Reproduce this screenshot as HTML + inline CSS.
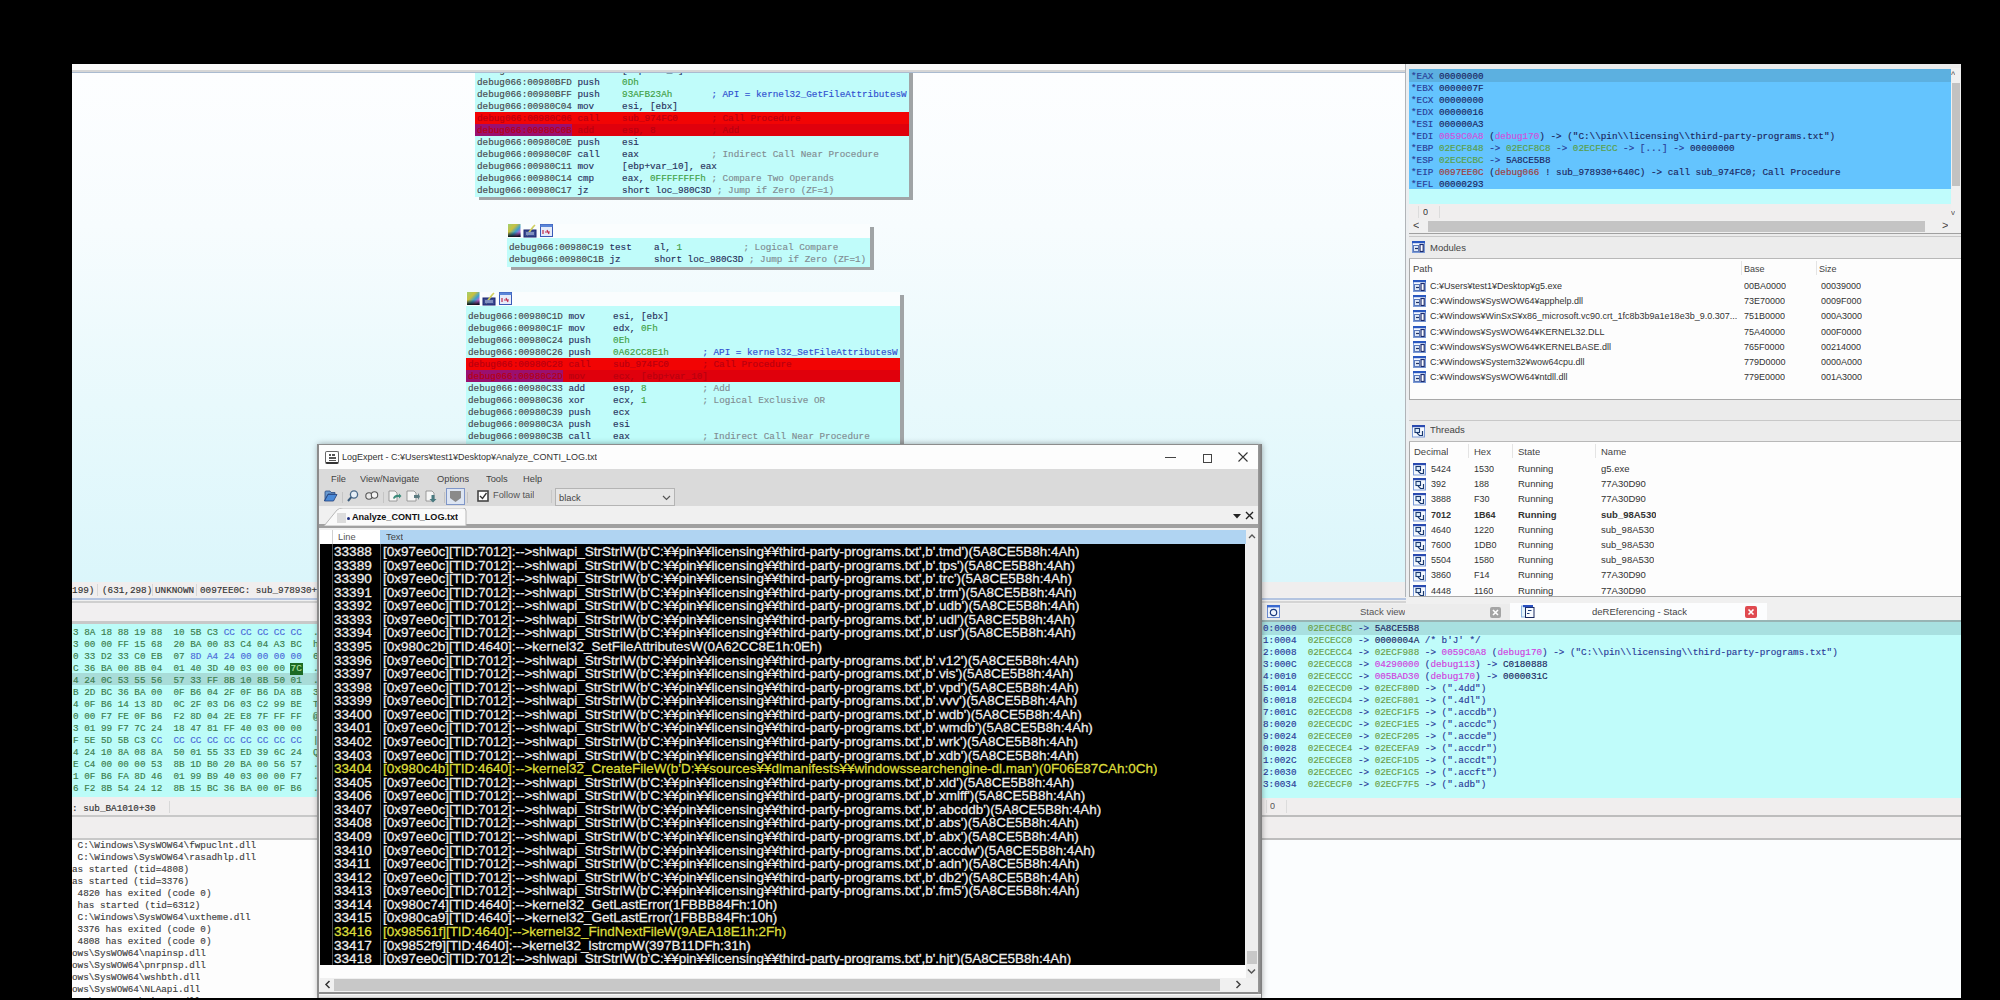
<!DOCTYPE html><html><head><meta charset="utf-8"><style>
*{margin:0;padding:0;box-sizing:border-box}
html,body{width:2000px;height:1000px;overflow:hidden;background:#000;position:relative}
.a{position:absolute;overflow:hidden}
.m{font-family:"Liberation Mono",monospace;font-size:9.3px;line-height:12px;white-space:pre;-webkit-text-stroke:0.15px currentColor}
.s{font-family:"Liberation Sans",sans-serif;white-space:pre}
.ad{color:#45484c}
.mn{color:#283060}
.nm{color:#40a044}
.cm{color:#808c92}
.op{color:#28305a}
.ap{color:#3050d0}
.rd{color:#c00010}
.rr span{color:#b80010 !important}
</style></head><body><div class="a" style="left:72px;top:64px;width:1889px;height:934px;background:#f0f0f0"></div><div class="a" style="left:72px;top:64px;width:1334px;height:6px;background:#fbfbfb"></div><div class="a" style="left:72px;top:70px;width:1334px;height:2px;background:#d6d6d6"></div><div class="a" style="left:72px;top:72px;width:1334px;height:1px;background:#aabbd0"></div><div class="a" style="left:72px;top:73px;width:1334px;height:509px;background:linear-gradient(#fdfeff 0%,#f7fcfe 30%,#e8f9fc 65%,#dbf6fb 100%)"><div class="a" style="left:407px;top:-8px;width:434px;height:135px;background:#a0a4a6"></div><div class="a" style="left:403px;top:-11px;width:434px;height:135px;"><div class="a" style="left:0px;top:0px;width:434px;height:135px;background:#c0fcfa"><div class="a" style="left:0px;top:50px;width:434px;height:12px;background:#f20404"></div><div class="a" style="left:0px;top:62px;width:434px;height:12px;background:#e0000c"></div><div class="a" style="left:0px;top:62px;width:97px;height:12px;background:#9a1070"></div><div class="a m" style="left:2px;top:3px;"><span class="ad">debug066:00980BF6</span> <span class="mn">mov    </span> <span class="op">[ebp+var_C]</span></div><div class="a m" style="left:2px;top:15px;"><span class="ad">debug066:00980BFD</span> <span class="mn">push   </span> <span class="nm">0Dh</span></div><div class="a m" style="left:2px;top:27px;"><span class="ad">debug066:00980BFF</span> <span class="mn">push   </span> <span class="nm">93AFB23Ah</span>       <span class="ap">; API = kernel32_GetFileAttributesW</span></div><div class="a m" style="left:2px;top:39px;"><span class="ad">debug066:00980C04</span> <span class="mn">mov    </span> <span class="op">esi, [ebx]</span></div><div class="a m rr" style="left:2px;top:51px;"><span class="ad">debug066:00980C06</span> <span class="mn">call   </span> <span class="op">sub_974FC0</span>      <span class="cm">; Call Procedure</span></div><div class="a m rr" style="left:2px;top:63px;"><span class="ad">debug066:00980C0B</span> <span class="mn">add    </span> <span class="op">esp, </span><span class="nm">8</span>          <span class="cm">; Add</span></div><div class="a m" style="left:2px;top:75px;"><span class="ad">debug066:00980C0E</span> <span class="mn">push   </span> <span class="op">esi</span></div><div class="a m" style="left:2px;top:87px;"><span class="ad">debug066:00980C0F</span> <span class="mn">call   </span> <span class="op">eax</span>             <span class="cm">; Indirect Call Near Procedure</span></div><div class="a m" style="left:2px;top:99px;"><span class="ad">debug066:00980C11</span> <span class="mn">mov    </span> <span class="op">[ebp+var_10], eax</span></div><div class="a m" style="left:2px;top:111px;"><span class="ad">debug066:00980C14</span> <span class="mn">cmp    </span> <span class="op">eax, </span><span class="nm">0FFFFFFFFh</span> <span class="cm">; Compare Two Operands</span></div><div class="a m" style="left:2px;top:123px;"><span class="ad">debug066:00980C17</span> <span class="mn">jz     </span> <span class="op">short loc_980C3D</span> <span class="cm">; Jump if Zero (ZF=1)</span></div></div></div><div class="a" style="left:439px;top:154px;width:363px;height:43px;background:#a0a4a6"></div><div class="a" style="left:435px;top:151px;width:363px;height:43px;"><div class="a" style="left:0px;top:0px;width:363px;height:14px;background:#fafdfe"></div><svg class="a" style="left:0;top:0" width="48" height="14"><defs><linearGradient id="pg" x1="0" y1="0" x2="1" y2="1"><stop offset="0" stop-color="#a0d070"/><stop offset="0.35" stop-color="#c8c040"/><stop offset="0.6" stop-color="#3aa0d0"/><stop offset="0.8" stop-color="#c060d0"/><stop offset="1" stop-color="#2030a0"/></linearGradient><linearGradient id="pb" x1="0" y1="0" x2="0" y2="1"><stop offset="0.6" stop-color="#000" stop-opacity="0"/><stop offset="1" stop-color="#000" stop-opacity="0.9"/></linearGradient></defs><rect x="1" y="0" width="12.5" height="13" fill="url(#pg)"/><rect x="1" y="0" width="12.5" height="13" fill="url(#pb)"/><rect x="17" y="6" width="12" height="7" fill="#3a4a90" stroke="#1a2470" stroke-width="1"/><path d="M20 11 L26 3 L28 1" stroke="#d0d060" stroke-width="1.6"/><rect x="19" y="8" width="8" height="3" fill="#8090c0"/><rect x="33.5" y="0.5" width="12" height="12" fill="#e6ecfa" stroke="#3a5ab8" stroke-width="1"/><rect x="33.5" y="0.5" width="12" height="2.5" fill="#5a86d8"/><path d="M36 6 L36 10 M38 8 L43 8 M40 6 L42 10" stroke="#c03050" stroke-width="1.2"/></svg><div class="a" style="left:0px;top:14px;width:363px;height:29px;background:#c0fcfa"><div class="a m" style="left:2px;top:4px;"><span class="ad">debug066:00980C19</span> <span class="mn">test   </span> <span class="op">al, </span><span class="nm">1</span>           <span class="cm">; Logical Compare</span></div><div class="a m" style="left:2px;top:16px;"><span class="ad">debug066:00980C1B</span> <span class="mn">jz     </span> <span class="op">short loc_980C3D</span> <span class="cm">; Jump if Zero (ZF=1)</span></div></div></div><div class="a" style="left:398px;top:222px;width:434px;height:180px;background:#a0a4a6"></div><div class="a" style="left:394px;top:219px;width:434px;height:180px;"><div class="a" style="left:0px;top:0px;width:434px;height:14px;background:#fafdfe"></div><svg class="a" style="left:0;top:0" width="48" height="14"><defs><linearGradient id="pg" x1="0" y1="0" x2="1" y2="1"><stop offset="0" stop-color="#a0d070"/><stop offset="0.35" stop-color="#c8c040"/><stop offset="0.6" stop-color="#3aa0d0"/><stop offset="0.8" stop-color="#c060d0"/><stop offset="1" stop-color="#2030a0"/></linearGradient><linearGradient id="pb" x1="0" y1="0" x2="0" y2="1"><stop offset="0.6" stop-color="#000" stop-opacity="0"/><stop offset="1" stop-color="#000" stop-opacity="0.9"/></linearGradient></defs><rect x="1" y="0" width="12.5" height="13" fill="url(#pg)"/><rect x="1" y="0" width="12.5" height="13" fill="url(#pb)"/><rect x="17" y="6" width="12" height="7" fill="#3a4a90" stroke="#1a2470" stroke-width="1"/><path d="M20 11 L26 3 L28 1" stroke="#d0d060" stroke-width="1.6"/><rect x="19" y="8" width="8" height="3" fill="#8090c0"/><rect x="33.5" y="0.5" width="12" height="12" fill="#e6ecfa" stroke="#3a5ab8" stroke-width="1"/><rect x="33.5" y="0.5" width="12" height="2.5" fill="#5a86d8"/><path d="M36 6 L36 10 M38 8 L43 8 M40 6 L42 10" stroke="#c03050" stroke-width="1.2"/></svg><div class="a" style="left:0px;top:14px;width:434px;height:166px;background:#c0fcfa"><div class="a" style="left:0px;top:52px;width:434px;height:12px;background:#f20404"></div><div class="a" style="left:0px;top:64px;width:434px;height:12px;background:#e0000c"></div><div class="a" style="left:0px;top:64px;width:97px;height:12px;background:#9a1070"></div><div class="a m" style="left:2px;top:5px;"><span class="ad">debug066:00980C1D</span> <span class="mn">mov    </span> <span class="op">esi, [ebx]</span></div><div class="a m" style="left:2px;top:17px;"><span class="ad">debug066:00980C1F</span> <span class="mn">mov    </span> <span class="op">edx, </span><span class="nm">0Fh</span></div><div class="a m" style="left:2px;top:29px;"><span class="ad">debug066:00980C24</span> <span class="mn">push   </span> <span class="nm">0Eh</span></div><div class="a m" style="left:2px;top:41px;"><span class="ad">debug066:00980C26</span> <span class="mn">push   </span> <span class="nm">0A62CC8E1h</span>      <span class="ap">; API = kernel32_SetFileAttributesW</span></div><div class="a m rr" style="left:2px;top:53px;"><span class="ad">debug066:00980C28</span> <span class="mn">call   </span> <span class="op">sub_974FC0</span>      <span class="cm">; Call Procedure</span></div><div class="a m rr" style="left:2px;top:65px;"><span class="ad">debug066:00980C2D</span> <span class="mn">mov    </span> <span class="op">ecx, [ebp+var_10]</span></div><div class="a m" style="left:2px;top:77px;"><span class="ad">debug066:00980C33</span> <span class="mn">add    </span> <span class="op">esp, </span><span class="nm">8</span>          <span class="cm">; Add</span></div><div class="a m" style="left:2px;top:89px;"><span class="ad">debug066:00980C36</span> <span class="mn">xor    </span> <span class="op">ecx, </span><span class="nm">1</span>          <span class="cm">; Logical Exclusive OR</span></div><div class="a m" style="left:2px;top:101px;"><span class="ad">debug066:00980C39</span> <span class="mn">push   </span> <span class="op">ecx</span></div><div class="a m" style="left:2px;top:113px;"><span class="ad">debug066:00980C3A</span> <span class="mn">push   </span> <span class="op">esi</span></div><div class="a m" style="left:2px;top:125px;"><span class="ad">debug066:00980C3B</span> <span class="mn">call   </span> <span class="op">eax</span>             <span class="cm">; Indirect Call Near Procedure</span></div><div class="a m" style="left:2px;top:137px;"><span class="ad">debug066:00980C3D</span> <span class="mn">push   </span> <span class="op">esi</span></div></div></div></div><div class="a" style="left:72px;top:582px;width:1334px;height:16px;background:#f0eeee"></div><div class="a m" style="left:66.5px;top:582px;color:#333;font-size:9.3px;line-height:16px;top:583px">5199)</div><div class="a m" style="left:102px;top:582px;color:#333;font-size:9.3px;line-height:16px;top:583px">(631,298)</div><div class="a m" style="left:155px;top:582px;color:#333;font-size:9.3px;line-height:16px;top:583px">UNKNOWN</div><div class="a m" style="left:200px;top:582px;color:#333;font-size:9.3px;line-height:16px;top:583px">0097EE0C: sub_978930+640C</div><div class="a" style="left:97px;top:584px;width:1px;height:12px;background:#d8d8d8"></div><div class="a" style="left:152px;top:584px;width:1px;height:12px;background:#d8d8d8"></div><div class="a" style="left:196px;top:584px;width:1px;height:12px;background:#d8d8d8"></div><div class="a" style="left:72px;top:598px;width:1334px;height:2px;background:#b4c4e0"></div><div class="a" style="left:72px;top:601px;width:1334px;height:2px;background:#cfcfcf"></div><div class="a" style="left:72px;top:603px;width:1186px;height:18px;background:#f1eff0"></div><div class="a" style="left:72px;top:621px;width:1186px;height:3px;background:#c8c8c8"></div><div class="a" style="left:72px;top:624px;width:1186px;height:173px;background:#bcfcf8"><div class="a" style="left:0px;top:49px;width:1186px;height:12px;background:#a8dcd8"></div><div class="a m" style="left:1px;top:3px;color:#3a7c4c">3 8A 18 88 19 88  10 5B C3 CC CC CC CC CC  .</div><div class="a m" style="left:151.66px;top:3px;color:#4a6ad8;background:#bcfcf8">CC CC CC CC CC</div><div class="a m" style="left:1px;top:15px;color:#3a7c4c">3 00 00 FF 15 68  20 BA 00 83 C4 04 A3 BC  h</div><div class="a m" style="left:1px;top:27px;color:#3a7c4c">0 33 D2 33 C0 EB  07 8D A4 24 00 00 00 00  6</div><div class="a m" style="left:118.18px;top:27px;color:#4a6ad8;background:#bcfcf8">8D A4 24 00 00 00 00</div><div class="a m" style="left:1px;top:39px;color:#3a7c4c">C 36 BA 00 8B 04  01 40 3D 40 03 00 00 7C  .</div><div class="a m" style="left:1px;top:51px;color:#3a7c4c">4 24 0C 53 55 56  57 33 FF 8B 10 8B 50 01  .</div><div class="a m" style="left:1px;top:63px;color:#3a7c4c">B 2D BC 36 BA 00  0F B6 04 2F 0F B6 DA 8B  3</div><div class="a m" style="left:1px;top:75px;color:#3a7c4c">4 0F B6 14 13 8D  0C 2F 03 D6 03 C2 99 BE  T</div><div class="a m" style="left:1px;top:87px;color:#3a7c4c">0 00 F7 FE 0F B6  F2 8D 04 2E E8 7F FF FF  @</div><div class="a m" style="left:1px;top:99px;color:#3a7c4c">3 01 99 F7 7C 24  18 47 81 FF 40 03 00 00  .</div><div class="a m" style="left:1px;top:111px;color:#3a7c4c">F 5E 5D 5B C3 CC  CC CC CC CC CC CC CC CC  |</div><div class="a m" style="left:84.7px;top:111px;color:#4a6ad8;background:#bcfcf8">C  CC CC CC CC CC CC CC CC</div><div class="a m" style="left:1px;top:123px;color:#3a7c4c">4 24 10 8A 08 8A  50 01 55 33 ED 39 6C 24  Q</div><div class="a m" style="left:1px;top:135px;color:#3a7c4c">E C4 00 00 00 53  8B 1D B0 20 BA 00 56 57  .</div><div class="a m" style="left:1px;top:147px;color:#3a7c4c">1 0F B6 FA 8D 46  01 99 B9 40 03 00 00 F7  .</div><div class="a m" style="left:1px;top:159px;color:#3a7c4c">6 F2 8B 54 24 12  8B 15 BC 36 BA 00 0F B6  .</div><div class="a" style="left:217.62px;top:39px;width:13px;height:12px;background:#1c6a24"><div class="a m" style="left:1px;top:0px;color:#b0e0a0">7C</div></div></div><div class="a" style="left:72px;top:797px;width:1186px;height:18px;background:#f0eeee"><div class="a m" style="left:0px;top:4px;color:#333;line-height:16px">: sub_BA1010+30</div><div class="a" style="left:97px;top:4px;width:1px;height:12px;background:#d8d8d8"></div></div><div class="a" style="left:72px;top:815px;width:1186px;height:2px;background:#c8c8c8"></div><div class="a" style="left:72px;top:817px;width:1186px;height:21px;background:#f0eeee"></div><div class="a" style="left:72px;top:838px;width:1186px;height:2px;background:#c8c8c8"></div><div class="a" style="left:72px;top:840px;width:1186px;height:158px;background:#fdfdfd"><div class="a m" style="left:0px;top:0px;color:#404040"> C:\Windows\SysWOW64\fwpuclnt.dll</div><div class="a m" style="left:0px;top:12px;color:#404040"> C:\Windows\SysWOW64\rasadhlp.dll</div><div class="a m" style="left:0px;top:24px;color:#404040">as started (tid=4808)</div><div class="a m" style="left:0px;top:36px;color:#404040">as started (tid=3376)</div><div class="a m" style="left:0px;top:48px;color:#404040"> 4820 has exited (code 0)</div><div class="a m" style="left:0px;top:60px;color:#404040"> has started (tid=6312)</div><div class="a m" style="left:0px;top:72px;color:#404040"> C:\Windows\SysWOW64\uxtheme.dll</div><div class="a m" style="left:0px;top:84px;color:#404040"> 3376 has exited (code 0)</div><div class="a m" style="left:0px;top:96px;color:#404040"> 4808 has exited (code 0)</div><div class="a m" style="left:0px;top:108px;color:#404040">ows\SysWOW64\napinsp.dll</div><div class="a m" style="left:0px;top:120px;color:#404040">ows\SysWOW64\pnrpnsp.dll</div><div class="a m" style="left:0px;top:132px;color:#404040">ows\SysWOW64\wshbth.dll</div><div class="a m" style="left:0px;top:144px;color:#404040">ows\SysWOW64\NLAapi.dll</div><div class="a m" style="left:0px;top:156px;color:#404040">ows\SysWOW64\winrnr.dll</div></div><div class="a" style="left:1406px;top:64px;width:555px;height:540px;background:#ebebeb"></div><div class="a" style="left:1406px;top:64px;width:3px;height:540px;background:#eceef0"></div><div class="a" style="left:1405px;top:64px;width:1px;height:534px;background:#b0b4b8"></div><div class="a" style="left:1409px;top:68px;width:542px;height:136px;"><div class="a" style="left:0px;top:1px;width:542px;height:13px;background:#5cb0e0"></div><div class="a" style="left:0px;top:14px;width:542px;height:107px;background:#64c4fe"></div><div class="a" style="left:0px;top:121px;width:542px;height:15px;background:#c0fcfc"></div><div class="a m" style="left:2px;top:3px;"><span style="color:#2a3e98">*EAX </span><span style="color:#1c2660">00000000</span></div><div class="a m" style="left:2px;top:15px;"><span style="color:#2a3e98">*EBX </span><span style="color:#1c2660">0000007F</span></div><div class="a m" style="left:2px;top:27px;"><span style="color:#2a3e98">*ECX </span><span style="color:#1c2660">00000000</span></div><div class="a m" style="left:2px;top:39px;"><span style="color:#2a3e98">*EDX </span><span style="color:#1c2660">00000016</span></div><div class="a m" style="left:2px;top:51px;"><span style="color:#2a3e98">*ESI </span><span style="color:#1c2660">000000A3</span></div><div class="a m" style="left:2px;top:63px;"><span style="color:#2a3e98">*EDI </span><span style="color:#d050e0">0059C0A8</span><span style="color:#1c2660"> (</span><span style="color:#d050e0">debug170</span><span style="color:#1c2660">) -&gt; ("C:\\pin\\licensing\\third-party-programs.txt")</span></div><div class="a m" style="left:2px;top:75px;"><span style="color:#2a3e98">*EBP </span><span style="color:#5aa048">02ECF848</span><span style="color:#2a3e98"> -&gt; </span><span style="color:#5aa048">02ECF8C8</span><span style="color:#2a3e98"> -&gt; </span><span style="color:#5aa048">02ECFECC</span><span style="color:#2a3e98"> -&gt; [...] -&gt; </span><span style="color:#1c2660">00000000</span></div><div class="a m" style="left:2px;top:87px;"><span style="color:#2a3e98">*ESP </span><span style="color:#5aa048">02ECECBC</span><span style="color:#2a3e98"> -&gt; </span><span style="color:#1c2660">5A8CE5B8</span></div><div class="a m" style="left:2px;top:99px;"><span style="color:#2a3e98">*EIP </span><span style="color:#a03c3c">0097EE0C</span><span style="color:#1c2660"> (</span><span style="color:#a03c3c">debug066</span><span style="color:#1c2660"> ! sub_978930+640C) -&gt; call sub_974FC0; Call Procedure</span></div><div class="a m" style="left:2px;top:111px;"><span style="color:#2a3e98">*EFL </span><span style="color:#1c2660">00000293</span></div></div><div class="a" style="left:1951px;top:68px;width:10px;height:152px;background:#f0f0f0"><div class="a" style="left:1px;top:15px;width:8px;height:103px;background:#c2c2c2"></div><div class="a s" style="left:0px;top:2px;font-size:9px;color:#555">^</div><div class="a s" style="left:0px;top:140px;font-size:8px;color:#555">v</div></div><div class="a" style="left:1409px;top:204px;width:542px;height:16px;background:#f0eeee"><div class="a s" style="left:14px;top:1px;font-size:9px;color:#333;line-height:14px">0</div><div class="a" style="left:9px;top:2px;width:1px;height:12px;background:#dcdcdc"></div><div class="a" style="left:30px;top:2px;width:1px;height:12px;background:#dcdcdc"></div></div><div class="a" style="left:1409px;top:220px;width:552px;height:13px;background:#f0f0f0"><div class="a" style="left:19px;top:1px;width:497px;height:11px;background:#c4c4c4"></div><div class="a s" style="left:4px;top:-1px;font-size:11px;color:#444"><</div><div class="a s" style="left:533px;top:-1px;font-size:11px;color:#444">></div></div><div class="a" style="left:1409px;top:233px;width:552px;height:1px;background:#a0a0a0"></div><div class="a" style="left:1409px;top:236px;width:552px;height:23px;background:#ececec;border-top:1px solid #c8c8c8;border-bottom:1px solid #b8b8b8"><svg class="a" style="left:3px;top:4px" width="13" height="13"><rect x="0.5" y="0.5" width="12" height="11" fill="#f4f8fe" stroke="#7a9ad8"/><rect x="0" y="0" width="13" height="2.2" fill="#2a58c0"/><rect x="1.5" y="4.5" width="5" height="6" fill="#dfe9f8" stroke="#5a78b8"/><path d="M3 7.5 L6 7.5" stroke="#203060" stroke-width="1.2"/><rect x="8" y="3.5" width="3.2" height="7" fill="#fff" stroke="#1a2a70" stroke-width="1.2"/></svg><div class="a s" style="left:21px;top:0px;font-size:9.5px;color:#444;line-height:22px">Modules</div></div><div class="a" style="left:1409px;top:259px;width:552px;height:141px;background:#fdfdfd;border-left:1px solid #a8a8a8;border-bottom:1px solid #a8a8a8"><div class="a s" style="left:3px;top:3px;font-size:9.5px;color:#444;line-height:14px">Path</div><div class="a s" style="left:334px;top:3px;font-size:9px;color:#444;line-height:14px">Base</div><div class="a s" style="left:409px;top:3px;font-size:9px;color:#444;line-height:14px">Size</div><div class="a" style="left:331px;top:2px;width:1px;height:14px;background:#e4e4e4"></div><div class="a" style="left:406px;top:2px;width:1px;height:14px;background:#e4e4e4"></div><svg class="a" style="left:3px;top:21.0px" width="13" height="13"><rect x="0.5" y="0.5" width="12" height="11" fill="#f4f8fe" stroke="#7a9ad8"/><rect x="0" y="0" width="13" height="2.2" fill="#2a58c0"/><rect x="1.5" y="4.5" width="5" height="6" fill="#dfe9f8" stroke="#5a78b8"/><path d="M3 7.5 L6 7.5" stroke="#203060" stroke-width="1.2"/><rect x="8" y="3.5" width="3.2" height="7" fill="#fff" stroke="#1a2a70" stroke-width="1.2"/></svg><div class="a s" style="left:20px;top:20.0px;font-size:9px;color:#333;line-height:14px">C:¥Users¥test1¥Desktop¥g5.exe</div><div class="a s" style="left:334px;top:20.0px;font-size:9px;color:#333;line-height:14px">00BA0000</div><div class="a s" style="left:411px;top:20.0px;font-size:9px;color:#333;line-height:14px">00039000</div><svg class="a" style="left:3px;top:36.2px" width="13" height="13"><rect x="0.5" y="0.5" width="12" height="11" fill="#f4f8fe" stroke="#7a9ad8"/><rect x="0" y="0" width="13" height="2.2" fill="#2a58c0"/><rect x="1.5" y="4.5" width="5" height="6" fill="#dfe9f8" stroke="#5a78b8"/><path d="M3 7.5 L6 7.5" stroke="#203060" stroke-width="1.2"/><rect x="8" y="3.5" width="3.2" height="7" fill="#fff" stroke="#1a2a70" stroke-width="1.2"/></svg><div class="a s" style="left:20px;top:35.2px;font-size:9px;color:#333;line-height:14px">C:¥Windows¥SysWOW64¥apphelp.dll</div><div class="a s" style="left:334px;top:35.2px;font-size:9px;color:#333;line-height:14px">73E70000</div><div class="a s" style="left:411px;top:35.2px;font-size:9px;color:#333;line-height:14px">0009F000</div><svg class="a" style="left:3px;top:51.4px" width="13" height="13"><rect x="0.5" y="0.5" width="12" height="11" fill="#f4f8fe" stroke="#7a9ad8"/><rect x="0" y="0" width="13" height="2.2" fill="#2a58c0"/><rect x="1.5" y="4.5" width="5" height="6" fill="#dfe9f8" stroke="#5a78b8"/><path d="M3 7.5 L6 7.5" stroke="#203060" stroke-width="1.2"/><rect x="8" y="3.5" width="3.2" height="7" fill="#fff" stroke="#1a2a70" stroke-width="1.2"/></svg><div class="a s" style="left:20px;top:50.4px;font-size:9px;color:#333;line-height:14px">C:¥Windows¥WinSxS¥x86_microsoft.vc90.crt_1fc8b3b9a1e18e3b_9.0.307...</div><div class="a s" style="left:334px;top:50.4px;font-size:9px;color:#333;line-height:14px">751B0000</div><div class="a s" style="left:411px;top:50.4px;font-size:9px;color:#333;line-height:14px">000A3000</div><svg class="a" style="left:3px;top:66.6px" width="13" height="13"><rect x="0.5" y="0.5" width="12" height="11" fill="#f4f8fe" stroke="#7a9ad8"/><rect x="0" y="0" width="13" height="2.2" fill="#2a58c0"/><rect x="1.5" y="4.5" width="5" height="6" fill="#dfe9f8" stroke="#5a78b8"/><path d="M3 7.5 L6 7.5" stroke="#203060" stroke-width="1.2"/><rect x="8" y="3.5" width="3.2" height="7" fill="#fff" stroke="#1a2a70" stroke-width="1.2"/></svg><div class="a s" style="left:20px;top:65.6px;font-size:9px;color:#333;line-height:14px">C:¥Windows¥SysWOW64¥KERNEL32.DLL</div><div class="a s" style="left:334px;top:65.6px;font-size:9px;color:#333;line-height:14px">75A40000</div><div class="a s" style="left:411px;top:65.6px;font-size:9px;color:#333;line-height:14px">000F0000</div><svg class="a" style="left:3px;top:81.8px" width="13" height="13"><rect x="0.5" y="0.5" width="12" height="11" fill="#f4f8fe" stroke="#7a9ad8"/><rect x="0" y="0" width="13" height="2.2" fill="#2a58c0"/><rect x="1.5" y="4.5" width="5" height="6" fill="#dfe9f8" stroke="#5a78b8"/><path d="M3 7.5 L6 7.5" stroke="#203060" stroke-width="1.2"/><rect x="8" y="3.5" width="3.2" height="7" fill="#fff" stroke="#1a2a70" stroke-width="1.2"/></svg><div class="a s" style="left:20px;top:80.8px;font-size:9px;color:#333;line-height:14px">C:¥Windows¥SysWOW64¥KERNELBASE.dll</div><div class="a s" style="left:334px;top:80.8px;font-size:9px;color:#333;line-height:14px">765F0000</div><div class="a s" style="left:411px;top:80.8px;font-size:9px;color:#333;line-height:14px">00214000</div><svg class="a" style="left:3px;top:97.0px" width="13" height="13"><rect x="0.5" y="0.5" width="12" height="11" fill="#f4f8fe" stroke="#7a9ad8"/><rect x="0" y="0" width="13" height="2.2" fill="#2a58c0"/><rect x="1.5" y="4.5" width="5" height="6" fill="#dfe9f8" stroke="#5a78b8"/><path d="M3 7.5 L6 7.5" stroke="#203060" stroke-width="1.2"/><rect x="8" y="3.5" width="3.2" height="7" fill="#fff" stroke="#1a2a70" stroke-width="1.2"/></svg><div class="a s" style="left:20px;top:96.0px;font-size:9px;color:#333;line-height:14px">C:¥Windows¥System32¥wow64cpu.dll</div><div class="a s" style="left:334px;top:96.0px;font-size:9px;color:#333;line-height:14px">779D0000</div><div class="a s" style="left:411px;top:96.0px;font-size:9px;color:#333;line-height:14px">0000A000</div><svg class="a" style="left:3px;top:112.19999999999999px" width="13" height="13"><rect x="0.5" y="0.5" width="12" height="11" fill="#f4f8fe" stroke="#7a9ad8"/><rect x="0" y="0" width="13" height="2.2" fill="#2a58c0"/><rect x="1.5" y="4.5" width="5" height="6" fill="#dfe9f8" stroke="#5a78b8"/><path d="M3 7.5 L6 7.5" stroke="#203060" stroke-width="1.2"/><rect x="8" y="3.5" width="3.2" height="7" fill="#fff" stroke="#1a2a70" stroke-width="1.2"/></svg><div class="a s" style="left:20px;top:111.19999999999999px;font-size:9px;color:#333;line-height:14px">C:¥Windows¥SysWOW64¥ntdll.dll</div><div class="a s" style="left:334px;top:111.19999999999999px;font-size:9px;color:#333;line-height:14px">779E0000</div><div class="a s" style="left:411px;top:111.19999999999999px;font-size:9px;color:#333;line-height:14px">001A3000</div></div><div class="a" style="left:1409px;top:420px;width:552px;height:22px;background:#ececec;border-top:1px solid #c8c8c8;border-bottom:1px solid #b8b8b8"><svg class="a" style="left:3px;top:4px" width="13" height="13"><rect x="0.5" y="0.5" width="12" height="11.5" fill="#f4f8fe" stroke="#7a9ad8"/><rect x="0" y="0" width="13" height="2.2" fill="#2a4ab0"/><rect x="3" y="3.5" width="4.5" height="4" fill="#dff0ff" stroke="#1a3a70" stroke-width="1.1"/><path d="M5 8 L7.5 10.5 L10.5 10.5 L10.5 6" stroke="#1a3a70" stroke-width="1.2" fill="none"/></svg><div class="a s" style="left:21px;top:0px;font-size:9.5px;color:#444;line-height:18px">Threads</div></div><div class="a" style="left:1409px;top:442px;width:552px;height:155px;background:#fdfdfd;border-left:1px solid #a8a8a8;border-bottom:1px solid #a8a8a8"><div class="a s" style="left:4px;top:3px;font-size:9.5px;color:#444;line-height:14px">Decimal</div><div class="a s" style="left:64px;top:3px;font-size:9.5px;color:#444;line-height:14px">Hex</div><div class="a s" style="left:108px;top:3px;font-size:9.5px;color:#444;line-height:14px">State</div><div class="a s" style="left:191px;top:3px;font-size:9.5px;color:#444;line-height:14px">Name</div><div class="a" style="left:58px;top:2px;width:1px;height:14px;background:#e4e4e4"></div><div class="a" style="left:102px;top:2px;width:1px;height:14px;background:#e4e4e4"></div><div class="a" style="left:185px;top:2px;width:1px;height:14px;background:#e4e4e4"></div><svg class="a" style="left:3px;top:21.0px" width="13" height="13"><rect x="0.5" y="0.5" width="12" height="11.5" fill="#f4f8fe" stroke="#7a9ad8"/><rect x="0" y="0" width="13" height="2.2" fill="#2a4ab0"/><rect x="3" y="3.5" width="4.5" height="4" fill="#dff0ff" stroke="#1a3a70" stroke-width="1.1"/><path d="M5 8 L7.5 10.5 L10.5 10.5 L10.5 6" stroke="#1a3a70" stroke-width="1.2" fill="none"/></svg><div class="a s" style="left:21px;top:20.0px;font-size:9px;color:#333;line-height:14px">5424</div><div class="a s" style="left:64px;top:20.0px;font-size:9px;color:#333;line-height:14px">1530</div><div class="a s" style="left:108px;top:20.0px;font-size:9.5px;color:#333;line-height:14px">Running</div><div class="a s" style="left:191px;top:20.0px;font-size:9.5px;color:#333;line-height:14px">g5.exe</div><svg class="a" style="left:3px;top:36.2px" width="13" height="13"><rect x="0.5" y="0.5" width="12" height="11.5" fill="#f4f8fe" stroke="#7a9ad8"/><rect x="0" y="0" width="13" height="2.2" fill="#2a4ab0"/><rect x="3" y="3.5" width="4.5" height="4" fill="#dff0ff" stroke="#1a3a70" stroke-width="1.1"/><path d="M5 8 L7.5 10.5 L10.5 10.5 L10.5 6" stroke="#1a3a70" stroke-width="1.2" fill="none"/></svg><div class="a s" style="left:21px;top:35.2px;font-size:9px;color:#333;line-height:14px">392</div><div class="a s" style="left:64px;top:35.2px;font-size:9px;color:#333;line-height:14px">188</div><div class="a s" style="left:108px;top:35.2px;font-size:9.5px;color:#333;line-height:14px">Running</div><div class="a s" style="left:191px;top:35.2px;font-size:9.5px;color:#333;line-height:14px">77A30D90</div><svg class="a" style="left:3px;top:51.4px" width="13" height="13"><rect x="0.5" y="0.5" width="12" height="11.5" fill="#f4f8fe" stroke="#7a9ad8"/><rect x="0" y="0" width="13" height="2.2" fill="#2a4ab0"/><rect x="3" y="3.5" width="4.5" height="4" fill="#dff0ff" stroke="#1a3a70" stroke-width="1.1"/><path d="M5 8 L7.5 10.5 L10.5 10.5 L10.5 6" stroke="#1a3a70" stroke-width="1.2" fill="none"/></svg><div class="a s" style="left:21px;top:50.4px;font-size:9px;color:#333;line-height:14px">3888</div><div class="a s" style="left:64px;top:50.4px;font-size:9px;color:#333;line-height:14px">F30</div><div class="a s" style="left:108px;top:50.4px;font-size:9.5px;color:#333;line-height:14px">Running</div><div class="a s" style="left:191px;top:50.4px;font-size:9.5px;color:#333;line-height:14px">77A30D90</div><svg class="a" style="left:3px;top:66.6px" width="13" height="13"><rect x="0.5" y="0.5" width="12" height="11.5" fill="#f4f8fe" stroke="#7a9ad8"/><rect x="0" y="0" width="13" height="2.2" fill="#2a4ab0"/><rect x="3" y="3.5" width="4.5" height="4" fill="#dff0ff" stroke="#1a3a70" stroke-width="1.1"/><path d="M5 8 L7.5 10.5 L10.5 10.5 L10.5 6" stroke="#1a3a70" stroke-width="1.2" fill="none"/></svg><div class="a s" style="left:21px;top:65.6px;font-weight:bold;font-size:9px;color:#333;line-height:14px">7012</div><div class="a s" style="left:64px;top:65.6px;font-weight:bold;font-size:9px;color:#333;line-height:14px">1B64</div><div class="a s" style="left:108px;top:65.6px;font-weight:bold;font-size:9.5px;color:#333;line-height:14px">Running</div><div class="a s" style="left:191px;top:65.6px;font-weight:bold;font-size:9.5px;color:#333;line-height:14px">sub_98A530</div><svg class="a" style="left:3px;top:81.8px" width="13" height="13"><rect x="0.5" y="0.5" width="12" height="11.5" fill="#f4f8fe" stroke="#7a9ad8"/><rect x="0" y="0" width="13" height="2.2" fill="#2a4ab0"/><rect x="3" y="3.5" width="4.5" height="4" fill="#dff0ff" stroke="#1a3a70" stroke-width="1.1"/><path d="M5 8 L7.5 10.5 L10.5 10.5 L10.5 6" stroke="#1a3a70" stroke-width="1.2" fill="none"/></svg><div class="a s" style="left:21px;top:80.8px;font-size:9px;color:#333;line-height:14px">4640</div><div class="a s" style="left:64px;top:80.8px;font-size:9px;color:#333;line-height:14px">1220</div><div class="a s" style="left:108px;top:80.8px;font-size:9.5px;color:#333;line-height:14px">Running</div><div class="a s" style="left:191px;top:80.8px;font-size:9.5px;color:#333;line-height:14px">sub_98A530</div><svg class="a" style="left:3px;top:97.0px" width="13" height="13"><rect x="0.5" y="0.5" width="12" height="11.5" fill="#f4f8fe" stroke="#7a9ad8"/><rect x="0" y="0" width="13" height="2.2" fill="#2a4ab0"/><rect x="3" y="3.5" width="4.5" height="4" fill="#dff0ff" stroke="#1a3a70" stroke-width="1.1"/><path d="M5 8 L7.5 10.5 L10.5 10.5 L10.5 6" stroke="#1a3a70" stroke-width="1.2" fill="none"/></svg><div class="a s" style="left:21px;top:96.0px;font-size:9px;color:#333;line-height:14px">7600</div><div class="a s" style="left:64px;top:96.0px;font-size:9px;color:#333;line-height:14px">1DB0</div><div class="a s" style="left:108px;top:96.0px;font-size:9.5px;color:#333;line-height:14px">Running</div><div class="a s" style="left:191px;top:96.0px;font-size:9.5px;color:#333;line-height:14px">sub_98A530</div><svg class="a" style="left:3px;top:112.19999999999999px" width="13" height="13"><rect x="0.5" y="0.5" width="12" height="11.5" fill="#f4f8fe" stroke="#7a9ad8"/><rect x="0" y="0" width="13" height="2.2" fill="#2a4ab0"/><rect x="3" y="3.5" width="4.5" height="4" fill="#dff0ff" stroke="#1a3a70" stroke-width="1.1"/><path d="M5 8 L7.5 10.5 L10.5 10.5 L10.5 6" stroke="#1a3a70" stroke-width="1.2" fill="none"/></svg><div class="a s" style="left:21px;top:111.19999999999999px;font-size:9px;color:#333;line-height:14px">5504</div><div class="a s" style="left:64px;top:111.19999999999999px;font-size:9px;color:#333;line-height:14px">1580</div><div class="a s" style="left:108px;top:111.19999999999999px;font-size:9.5px;color:#333;line-height:14px">Running</div><div class="a s" style="left:191px;top:111.19999999999999px;font-size:9.5px;color:#333;line-height:14px">sub_98A530</div><svg class="a" style="left:3px;top:127.39999999999999px" width="13" height="13"><rect x="0.5" y="0.5" width="12" height="11.5" fill="#f4f8fe" stroke="#7a9ad8"/><rect x="0" y="0" width="13" height="2.2" fill="#2a4ab0"/><rect x="3" y="3.5" width="4.5" height="4" fill="#dff0ff" stroke="#1a3a70" stroke-width="1.1"/><path d="M5 8 L7.5 10.5 L10.5 10.5 L10.5 6" stroke="#1a3a70" stroke-width="1.2" fill="none"/></svg><div class="a s" style="left:21px;top:126.39999999999999px;font-size:9px;color:#333;line-height:14px">3860</div><div class="a s" style="left:64px;top:126.39999999999999px;font-size:9px;color:#333;line-height:14px">F14</div><div class="a s" style="left:108px;top:126.39999999999999px;font-size:9.5px;color:#333;line-height:14px">Running</div><div class="a s" style="left:191px;top:126.39999999999999px;font-size:9.5px;color:#333;line-height:14px">77A30D90</div><svg class="a" style="left:3px;top:142.6px" width="13" height="13"><rect x="0.5" y="0.5" width="12" height="11.5" fill="#f4f8fe" stroke="#7a9ad8"/><rect x="0" y="0" width="13" height="2.2" fill="#2a4ab0"/><rect x="3" y="3.5" width="4.5" height="4" fill="#dff0ff" stroke="#1a3a70" stroke-width="1.1"/><path d="M5 8 L7.5 10.5 L10.5 10.5 L10.5 6" stroke="#1a3a70" stroke-width="1.2" fill="none"/></svg><div class="a s" style="left:21px;top:141.6px;font-size:9px;color:#333;line-height:14px">4448</div><div class="a s" style="left:64px;top:141.6px;font-size:9px;color:#333;line-height:14px">1160</div><div class="a s" style="left:108px;top:141.6px;font-size:9.5px;color:#333;line-height:14px">Running</div><div class="a s" style="left:191px;top:141.6px;font-size:9.5px;color:#333;line-height:14px">77A30D90</div></div><div class="a" style="left:1258px;top:597px;width:703px;height:6px;background:#f0f0f0"></div><div class="a" style="left:1258px;top:598px;width:148px;height:2px;background:#b4c4e0"></div><div class="a" style="left:1258px;top:601px;width:148px;height:2px;background:#d4d4d4"></div><div class="a" style="left:1258px;top:603px;width:703px;height:18px;background:#f0f0f0"></div><div class="a" style="left:1258px;top:603px;width:703px;height:18px;"><div class="a" style="left:4px;top:1px;width:248px;height:16px;background:#ececec"></div><svg class="a" style="left:9px;top:2px" width="13" height="13"><rect x="0.5" y="0.5" width="12" height="12" fill="#eef4fc" stroke="#6a8ad0"/><rect x="0" y="0" width="13" height="2.4" fill="#3a6ad0"/><circle cx="6.5" cy="7.5" r="3.2" fill="none" stroke="#1a3a80" stroke-width="1.2"/></svg><div class="a s" style="left:102px;top:0px;font-size:9.5px;color:#555;line-height:17px">Stack view</div><svg class="a" style="left:232px;top:4px" width="11" height="11"><rect x="0" y="0" width="11" height="11" rx="2" fill="#a4a4a4"/><path d="M3 3 L8 8 M8 3 L3 8" stroke="#fff" stroke-width="1.6"/></svg><div class="a" style="left:252px;top:0px;width:257px;height:17px;background:#fcfdfe"></div><svg class="a" style="left:263px;top:2px" width="14" height="13"><rect x="0.5" y="1" width="8" height="11" fill="#e4f4fc" stroke="#8ab0e0"/><rect x="4.5" y="2.5" width="8.5" height="10" fill="#f8fbff" stroke="#1a2a60" stroke-width="1"/><rect x="2" y="0" width="10" height="2.2" fill="#2a50c0"/><path d="M7 5.5 L10.5 5.5 M6 8.5 L8.5 8.5" stroke="#20407a" stroke-width="1.1"/></svg><div class="a s" style="left:334px;top:0px;font-size:9.5px;color:#444;line-height:17px">deREferencing - Stack</div><svg class="a" style="left:487px;top:3px" width="12" height="12"><rect x="0" y="0" width="12" height="12" rx="2" fill="#e04a50"/><path d="M3.5 3.5 L8.5 8.5 M8.5 3.5 L3.5 8.5" stroke="#fff" stroke-width="1.6"/></svg></div><div class="a" style="left:1258px;top:620px;width:703px;height:2px;background:#98b4b4"></div><div class="a" style="left:1258px;top:622px;width:703px;height:176px;background:#c0fcfa"><div class="a" style="left:0px;top:0px;width:703px;height:13px;background:#a8e0e0"></div><div class="a m" style="left:5px;top:1px;"><span style="color:#2a3a98">0:0000</span><span style="color:#1c2660">  </span><span style="color:#6aa048">02ECECBC</span><span style="color:#2a3a98"> -&gt; </span><span style="color:#1c2660">5A8CE5B8</span></div><div class="a m" style="left:5px;top:13px;"><span style="color:#2a3a98">1:0004</span><span style="color:#1c2660">  </span><span style="color:#6aa048">02ECECC0</span><span style="color:#2a3a98"> -&gt; </span><span style="color:#1c2660">0000004A</span><span style="color:#2a3a98"> /* b'J' */</span></div><div class="a m" style="left:5px;top:25px;"><span style="color:#2a3a98">2:0008</span><span style="color:#1c2660">  </span><span style="color:#6aa048">02ECECC4</span><span style="color:#2a3a98"> -&gt; </span><span style="color:#6aa048">02ECF988</span><span style="color:#2a3a98"> -&gt; </span><span style="color:#d040e0">0059C0A8</span><span style="color:#2a3a98"> (</span><span style="color:#d040e0">debug170</span><span style="color:#2a3a98">) -&gt; ("C:\\pin\\licensing\\third-party-programs.txt")</span></div><div class="a m" style="left:5px;top:37px;"><span style="color:#2a3a98">3:000C</span><span style="color:#1c2660">  </span><span style="color:#6aa048">02ECECC8</span><span style="color:#2a3a98"> -&gt; </span><span style="color:#d040e0">04290000</span><span style="color:#2a3a98"> (</span><span style="color:#d040e0">debug113</span><span style="color:#2a3a98">) -&gt; </span><span style="color:#1c2660">C0180888</span></div><div class="a m" style="left:5px;top:49px;"><span style="color:#2a3a98">4:0010</span><span style="color:#1c2660">  </span><span style="color:#6aa048">02ECECCC</span><span style="color:#2a3a98"> -&gt; </span><span style="color:#d040e0">005BAD30</span><span style="color:#2a3a98"> (</span><span style="color:#d040e0">debug170</span><span style="color:#2a3a98">) -&gt; </span><span style="color:#1c2660">0000031C</span></div><div class="a m" style="left:5px;top:61px;"><span style="color:#2a3a98">5:0014</span><span style="color:#1c2660">  </span><span style="color:#6aa048">02ECECD0</span><span style="color:#2a3a98"> -&gt; </span><span style="color:#6aa048">02ECF80D</span><span style="color:#2a3a98"> -&gt; (".4dd")</span></div><div class="a m" style="left:5px;top:73px;"><span style="color:#2a3a98">6:0018</span><span style="color:#1c2660">  </span><span style="color:#6aa048">02ECECD4</span><span style="color:#2a3a98"> -&gt; </span><span style="color:#6aa048">02ECF801</span><span style="color:#2a3a98"> -&gt; (".4dl")</span></div><div class="a m" style="left:5px;top:85px;"><span style="color:#2a3a98">7:001C</span><span style="color:#1c2660">  </span><span style="color:#6aa048">02ECECD8</span><span style="color:#2a3a98"> -&gt; </span><span style="color:#6aa048">02ECF1F5</span><span style="color:#2a3a98"> -&gt; (".accdb")</span></div><div class="a m" style="left:5px;top:97px;"><span style="color:#2a3a98">8:0020</span><span style="color:#1c2660">  </span><span style="color:#6aa048">02ECECDC</span><span style="color:#2a3a98"> -&gt; </span><span style="color:#6aa048">02ECF1E5</span><span style="color:#2a3a98"> -&gt; (".accdc")</span></div><div class="a m" style="left:5px;top:109px;"><span style="color:#2a3a98">9:0024</span><span style="color:#1c2660">  </span><span style="color:#6aa048">02ECECE0</span><span style="color:#2a3a98"> -&gt; </span><span style="color:#6aa048">02ECF205</span><span style="color:#2a3a98"> -&gt; (".accde")</span></div><div class="a m" style="left:5px;top:121px;"><span style="color:#2a3a98">0:0028</span><span style="color:#1c2660">  </span><span style="color:#6aa048">02ECECE4</span><span style="color:#2a3a98"> -&gt; </span><span style="color:#6aa048">02ECEFA9</span><span style="color:#2a3a98"> -&gt; (".accdr")</span></div><div class="a m" style="left:5px;top:133px;"><span style="color:#2a3a98">1:002C</span><span style="color:#1c2660">  </span><span style="color:#6aa048">02ECECE8</span><span style="color:#2a3a98"> -&gt; </span><span style="color:#6aa048">02ECF1D5</span><span style="color:#2a3a98"> -&gt; (".accdt")</span></div><div class="a m" style="left:5px;top:145px;"><span style="color:#2a3a98">2:0030</span><span style="color:#1c2660">  </span><span style="color:#6aa048">02ECECEC</span><span style="color:#2a3a98"> -&gt; </span><span style="color:#6aa048">02ECF1C5</span><span style="color:#2a3a98"> -&gt; (".accft")</span></div><div class="a m" style="left:5px;top:157px;"><span style="color:#2a3a98">3:0034</span><span style="color:#1c2660">  </span><span style="color:#6aa048">02ECECF0</span><span style="color:#2a3a98"> -&gt; </span><span style="color:#6aa048">02ECF7F5</span><span style="color:#2a3a98"> -&gt; (".adb")</span></div></div><div class="a" style="left:1258px;top:798px;width:703px;height:17px;background:#f0eeee"><div class="a s" style="left:12px;top:1px;font-size:9px;color:#555;line-height:14px">0</div><div class="a" style="left:8px;top:2px;width:1px;height:13px;background:#dcdcdc"></div><div class="a" style="left:28px;top:2px;width:1px;height:13px;background:#dcdcdc"></div></div><div class="a" style="left:1258px;top:815px;width:703px;height:2px;background:#bdbdbd"></div><div class="a" style="left:1258px;top:817px;width:703px;height:21px;background:#f0eeee"></div><div class="a" style="left:1258px;top:838px;width:703px;height:2px;background:#bdbdbd"></div><div class="a" style="left:1258px;top:840px;width:703px;height:158px;background:#fbfdfe"></div><div class="a" style="left:318px;top:444px;width:944px;height:554px;box-shadow:0 0 6px rgba(0,0,0,0.35);overflow:visible"><div class="a" style="left:-1px;top:0px;width:945px;height:554px;background:#f0f0f0;border:2px solid #8c8c8c;border-top:1px solid #8c8c8c"></div><div class="a" style="left:1px;top:1px;width:942px;height:24px;background:#fdfdfd"><div class="a" style="left:6px;top:6px;width:14px;height:13px;background:#fff;border:1px solid #666;border-bottom:2px solid #333;border-radius:2px"><div class="a" style="left:3px;top:2px;width:2px;height:2px;background:#555"></div><div class="a" style="left:6px;top:2px;width:3px;height:2px;background:#555"></div><div class="a" style="left:3px;top:5px;width:7px;height:2px;background:#555"></div><div class="a" style="left:3px;top:8px;width:7px;height:1px;background:#555"></div></div><div class="a s" style="left:23px;top:0px;font-size:9px;color:#333;line-height:25px">LogExpert - C:¥Users¥test1¥Desktop¥Analyze_CONTI_LOG.txt</div><div class="a" style="left:846px;top:12px;width:11px;height:1px;background:#444"></div><div class="a" style="left:884px;top:9px;width:9px;height:9px;border:1px solid #444"></div><svg class="a" style="left:919px;top:7px" width="10" height="10"><path d="M0.5 0.5 L9.5 9.5 M9.5 0.5 L0.5 9.5" stroke="#333" stroke-width="1.1"/></svg></div><div class="a" style="left:1px;top:25px;width:942px;height:37px;background:#dadada"><div class="a s" style="left:12px;top:3px;font-size:9.3px;color:#444;line-height:14px">File</div><div class="a s" style="left:41px;top:3px;font-size:9.3px;color:#444;line-height:14px">View/Navigate</div><div class="a s" style="left:118px;top:3px;font-size:9.3px;color:#444;line-height:14px">Options</div><div class="a s" style="left:167px;top:3px;font-size:9.3px;color:#444;line-height:14px">Tools</div><div class="a s" style="left:204px;top:3px;font-size:9.3px;color:#444;line-height:14px">Help</div><svg class="a" style="left:0;top:0" width="360" height="37"><path d="M6 31 L6 23 Q6 22 7 22 L11 22 L12 23.5 L16 23.5 L16 25 L9 25 L5.5 32 Z" fill="#6a9ad0" stroke="#2a4a80" stroke-width="0.8"/><path d="M5.5 32 L9 25.5 L18 25.5 L14.5 32 Z" fill="#4a8ad8" stroke="#1e3c78" stroke-width="0.8"/><line x1="23.5" y1="23" x2="23.5" y2="34" stroke="#c4c4c4"/><circle cx="35" cy="25.5" r="3.6" fill="#e6eef6" stroke="#4a6a8a" stroke-width="1.3"/><path d="M32.3 28.2 L29 32" stroke="#3a5a7a" stroke-width="2"/><circle cx="50" cy="27" r="3.2" fill="#e8e8e8" stroke="#555" stroke-width="1.1"/><circle cx="55.5" cy="26" r="3.2" fill="#f4f4f4" stroke="#555" stroke-width="1.1"/><line x1="64.5" y1="23" x2="64.5" y2="34" stroke="#c4c4c4"/><path d="M70 22 L76 22 L78 24 L78 32 L70 32 Z" fill="#f6f6f6" stroke="#888" stroke-width="0.8"/><path d="M74 29 Q76 25 80 26 L80 24.5 L82.5 27 L80 29.5 L80 28 Q77 27.5 75 30 Z" fill="#3a8a7a"/><path d="M88 22 L95 22 L97 24 L97 32 L88 32 Z" fill="#f6f6f6" stroke="#888" stroke-width="0.8"/><path d="M95 26 L99 26 L99 24 L101 27.5 L99 31 L99 29 L95 29 Z" fill="#5a7a80"/><path d="M107 22 L113 22 L115 24 L115 32 L107 32 Z" fill="#f6f6f6" stroke="#888" stroke-width="0.8"/><path d="M112.5 26 L115.5 26 L115.5 30 L117.5 30 L114 33.5 L110.5 30 L112.5 30 Z" fill="#4a7a80"/><line x1="125.5" y1="23" x2="125.5" y2="34" stroke="#c4c4c4"/><rect x="127.5" y="19.5" width="18" height="16" fill="#dde5f2" stroke="#7f96c8"/><path d="M131 22 L142 22 L142 29 L136.5 33 L131 29 Z" fill="#8a8a8a"/><line x1="148.5" y1="23" x2="148.5" y2="34" stroke="#c4c4c4"/><rect x="159" y="22" width="10" height="10" fill="#fff" stroke="#444" stroke-width="1.6"/><path d="M161 27 L163.5 29.5 L167.5 24" stroke="#333" stroke-width="1.3" fill="none"/></svg><div class="a s" style="left:174px;top:19px;font-size:9.3px;color:#555;line-height:14px">Follow tail</div><div class="a" style="left:232px;top:21px;width:1px;height:13px;background:#c8c8c8"></div><div class="a" style="left:236px;top:19px;width:120px;height:18px;background:#e6e6e6;border:1px solid #b4b4b4"><div class="a s" style="left:3px;top:1px;font-size:9.3px;color:#444;line-height:16px">black</div><svg class="a" style="left:106px;top:6px" width="9" height="6"><path d="M1 1 L4.5 4.5 L8 1" stroke="#555" stroke-width="1.2" fill="none"/></svg></div></div><div class="a" style="left:1px;top:62px;width:942px;height:22px;background:#f0f0f0"><div class="a" style="left:0px;top:18px;width:942px;height:4px;background:#a0a0a0"></div><svg class="a" style="left:4px;top:2px" width="150" height="18"><path d="M1 18 L14 2 Q16 0 20 0 L140 0 Q143 0 143 3 L143 18 Z" fill="#fafafa" stroke="#b8b8b8"/></svg><div class="a" style="left:18px;top:7px;width:9px;height:10px;background:#dcdcdc"></div><div class="a" style="left:28px;top:11px;width:3px;height:3px;background:#203080;border-radius:50%"></div><div class="a s" style="left:33px;top:3px;font-size:9.1px;font-weight:bold;color:#111;line-height:16px">Analyze_CONTI_LOG.txt</div><svg class="a" style="left:914px;top:8px" width="8" height="5"><path d="M0 0 L8 0 L4 4.5 Z" fill="#222"/></svg><svg class="a" style="left:926px;top:5px" width="9" height="9"><path d="M1 1 L8 8 M8 1 L1 8" stroke="#222" stroke-width="1.4"/></svg></div><div class="a" style="left:2px;top:86px;width:926px;height:14px;"><div class="a" style="left:0px;top:0px;width:12px;height:14px;background:#fff"></div><div class="a" style="left:12px;top:0px;width:1px;height:14px;background:#d0d0d0"></div><div class="a" style="left:13px;top:0px;width:47px;height:14px;background:#fff"><div class="a s" style="left:5px;top:0px;font-size:9.3px;color:#555;line-height:14px">Line</div></div><div class="a" style="left:60px;top:0px;width:866px;height:14px;background:#b0d4f2"><div class="a s" style="left:6px;top:0px;font-size:9.3px;color:#444;line-height:14px">Text</div></div></div><div class="a" style="left:2px;top:100px;width:925px;height:421px;background:#000"><div class="a" style="left:12px;top:0px;width:1px;height:421px;background:#505050"></div><div class="a" style="left:60px;top:0px;width:1px;height:421px;background:#505050"></div><div class="a s" style="left:14px;top:1.0px;font-size:13.6px;color:#ececec;line-height:14px;-webkit-text-stroke:0.3px #ececec">33388</div><div class="a s" style="left:63px;top:1.0px;font-size:13.48px;color:#ececec;line-height:14px;-webkit-text-stroke:0.3px #ececec">[0x97ee0c][TID:7012]:--&gt;shlwapi_StrStrIW(b'C:¥¥pin¥¥licensing¥¥third-party-programs.txt',b'.tmd')(5A8CE5B8h:4Ah)</div><div class="a s" style="left:14px;top:14.57px;font-size:13.6px;color:#ececec;line-height:14px;-webkit-text-stroke:0.3px #ececec">33389</div><div class="a s" style="left:63px;top:14.57px;font-size:13.48px;color:#ececec;line-height:14px;-webkit-text-stroke:0.3px #ececec">[0x97ee0c][TID:7012]:--&gt;shlwapi_StrStrIW(b'C:¥¥pin¥¥licensing¥¥third-party-programs.txt',b'.tps')(5A8CE5B8h:4Ah)</div><div class="a s" style="left:14px;top:28.14px;font-size:13.6px;color:#ececec;line-height:14px;-webkit-text-stroke:0.3px #ececec">33390</div><div class="a s" style="left:63px;top:28.14px;font-size:13.48px;color:#ececec;line-height:14px;-webkit-text-stroke:0.3px #ececec">[0x97ee0c][TID:7012]:--&gt;shlwapi_StrStrIW(b'C:¥¥pin¥¥licensing¥¥third-party-programs.txt',b'.trc')(5A8CE5B8h:4Ah)</div><div class="a s" style="left:14px;top:41.71px;font-size:13.6px;color:#ececec;line-height:14px;-webkit-text-stroke:0.3px #ececec">33391</div><div class="a s" style="left:63px;top:41.71px;font-size:13.48px;color:#ececec;line-height:14px;-webkit-text-stroke:0.3px #ececec">[0x97ee0c][TID:7012]:--&gt;shlwapi_StrStrIW(b'C:¥¥pin¥¥licensing¥¥third-party-programs.txt',b'.trm')(5A8CE5B8h:4Ah)</div><div class="a s" style="left:14px;top:55.28px;font-size:13.6px;color:#ececec;line-height:14px;-webkit-text-stroke:0.3px #ececec">33392</div><div class="a s" style="left:63px;top:55.28px;font-size:13.48px;color:#ececec;line-height:14px;-webkit-text-stroke:0.3px #ececec">[0x97ee0c][TID:7012]:--&gt;shlwapi_StrStrIW(b'C:¥¥pin¥¥licensing¥¥third-party-programs.txt',b'.udb')(5A8CE5B8h:4Ah)</div><div class="a s" style="left:14px;top:68.85px;font-size:13.6px;color:#ececec;line-height:14px;-webkit-text-stroke:0.3px #ececec">33393</div><div class="a s" style="left:63px;top:68.85px;font-size:13.48px;color:#ececec;line-height:14px;-webkit-text-stroke:0.3px #ececec">[0x97ee0c][TID:7012]:--&gt;shlwapi_StrStrIW(b'C:¥¥pin¥¥licensing¥¥third-party-programs.txt',b'.udl')(5A8CE5B8h:4Ah)</div><div class="a s" style="left:14px;top:82.42px;font-size:13.6px;color:#ececec;line-height:14px;-webkit-text-stroke:0.3px #ececec">33394</div><div class="a s" style="left:63px;top:82.42px;font-size:13.48px;color:#ececec;line-height:14px;-webkit-text-stroke:0.3px #ececec">[0x97ee0c][TID:7012]:--&gt;shlwapi_StrStrIW(b'C:¥¥pin¥¥licensing¥¥third-party-programs.txt',b'.usr')(5A8CE5B8h:4Ah)</div><div class="a s" style="left:14px;top:95.99000000000001px;font-size:13.6px;color:#ececec;line-height:14px;-webkit-text-stroke:0.3px #ececec">33395</div><div class="a s" style="left:63px;top:95.99000000000001px;font-size:13.48px;color:#ececec;line-height:14px;-webkit-text-stroke:0.3px #ececec">[0x980c2b][TID:4640]:--&gt;kernel32_SetFileAttributesW(0A62CC8E1h:0Eh)</div><div class="a s" style="left:14px;top:109.56px;font-size:13.6px;color:#ececec;line-height:14px;-webkit-text-stroke:0.3px #ececec">33396</div><div class="a s" style="left:63px;top:109.56px;font-size:13.48px;color:#ececec;line-height:14px;-webkit-text-stroke:0.3px #ececec">[0x97ee0c][TID:7012]:--&gt;shlwapi_StrStrIW(b'C:¥¥pin¥¥licensing¥¥third-party-programs.txt',b'.v12')(5A8CE5B8h:4Ah)</div><div class="a s" style="left:14px;top:123.13px;font-size:13.6px;color:#ececec;line-height:14px;-webkit-text-stroke:0.3px #ececec">33397</div><div class="a s" style="left:63px;top:123.13px;font-size:13.48px;color:#ececec;line-height:14px;-webkit-text-stroke:0.3px #ececec">[0x97ee0c][TID:7012]:--&gt;shlwapi_StrStrIW(b'C:¥¥pin¥¥licensing¥¥third-party-programs.txt',b'.vis')(5A8CE5B8h:4Ah)</div><div class="a s" style="left:14px;top:136.7px;font-size:13.6px;color:#ececec;line-height:14px;-webkit-text-stroke:0.3px #ececec">33398</div><div class="a s" style="left:63px;top:136.7px;font-size:13.48px;color:#ececec;line-height:14px;-webkit-text-stroke:0.3px #ececec">[0x97ee0c][TID:7012]:--&gt;shlwapi_StrStrIW(b'C:¥¥pin¥¥licensing¥¥third-party-programs.txt',b'.vpd')(5A8CE5B8h:4Ah)</div><div class="a s" style="left:14px;top:150.27px;font-size:13.6px;color:#ececec;line-height:14px;-webkit-text-stroke:0.3px #ececec">33399</div><div class="a s" style="left:63px;top:150.27px;font-size:13.48px;color:#ececec;line-height:14px;-webkit-text-stroke:0.3px #ececec">[0x97ee0c][TID:7012]:--&gt;shlwapi_StrStrIW(b'C:¥¥pin¥¥licensing¥¥third-party-programs.txt',b'.vvv')(5A8CE5B8h:4Ah)</div><div class="a s" style="left:14px;top:163.84px;font-size:13.6px;color:#ececec;line-height:14px;-webkit-text-stroke:0.3px #ececec">33400</div><div class="a s" style="left:63px;top:163.84px;font-size:13.48px;color:#ececec;line-height:14px;-webkit-text-stroke:0.3px #ececec">[0x97ee0c][TID:7012]:--&gt;shlwapi_StrStrIW(b'C:¥¥pin¥¥licensing¥¥third-party-programs.txt',b'.wdb')(5A8CE5B8h:4Ah)</div><div class="a s" style="left:14px;top:177.41px;font-size:13.6px;color:#ececec;line-height:14px;-webkit-text-stroke:0.3px #ececec">33401</div><div class="a s" style="left:63px;top:177.41px;font-size:13.48px;color:#ececec;line-height:14px;-webkit-text-stroke:0.3px #ececec">[0x97ee0c][TID:7012]:--&gt;shlwapi_StrStrIW(b'C:¥¥pin¥¥licensing¥¥third-party-programs.txt',b'.wmdb')(5A8CE5B8h:4Ah)</div><div class="a s" style="left:14px;top:190.98000000000002px;font-size:13.6px;color:#ececec;line-height:14px;-webkit-text-stroke:0.3px #ececec">33402</div><div class="a s" style="left:63px;top:190.98000000000002px;font-size:13.48px;color:#ececec;line-height:14px;-webkit-text-stroke:0.3px #ececec">[0x97ee0c][TID:7012]:--&gt;shlwapi_StrStrIW(b'C:¥¥pin¥¥licensing¥¥third-party-programs.txt',b'.wrk')(5A8CE5B8h:4Ah)</div><div class="a s" style="left:14px;top:204.55px;font-size:13.6px;color:#ececec;line-height:14px;-webkit-text-stroke:0.3px #ececec">33403</div><div class="a s" style="left:63px;top:204.55px;font-size:13.48px;color:#ececec;line-height:14px;-webkit-text-stroke:0.3px #ececec">[0x97ee0c][TID:7012]:--&gt;shlwapi_StrStrIW(b'C:¥¥pin¥¥licensing¥¥third-party-programs.txt',b'.xdb')(5A8CE5B8h:4Ah)</div><div class="a s" style="left:14px;top:218.12px;font-size:13.6px;color:#dcdc3c;line-height:14px;-webkit-text-stroke:0.3px #dcdc3c">33404</div><div class="a s" style="left:63px;top:218.12px;font-size:13.48px;color:#dcdc3c;line-height:14px;-webkit-text-stroke:0.3px #dcdc3c">[0x980c4b][TID:4640]:--&gt;kernel32_CreateFileW(b'D:¥¥sources¥¥dlmanifests¥¥windowssearchengine-dl.man')(0F06E87CAh:0Ch)</div><div class="a s" style="left:14px;top:231.69px;font-size:13.6px;color:#ececec;line-height:14px;-webkit-text-stroke:0.3px #ececec">33405</div><div class="a s" style="left:63px;top:231.69px;font-size:13.48px;color:#ececec;line-height:14px;-webkit-text-stroke:0.3px #ececec">[0x97ee0c][TID:7012]:--&gt;shlwapi_StrStrIW(b'C:¥¥pin¥¥licensing¥¥third-party-programs.txt',b'.xld')(5A8CE5B8h:4Ah)</div><div class="a s" style="left:14px;top:245.26px;font-size:13.6px;color:#ececec;line-height:14px;-webkit-text-stroke:0.3px #ececec">33406</div><div class="a s" style="left:63px;top:245.26px;font-size:13.48px;color:#ececec;line-height:14px;-webkit-text-stroke:0.3px #ececec">[0x97ee0c][TID:7012]:--&gt;shlwapi_StrStrIW(b'C:¥¥pin¥¥licensing¥¥third-party-programs.txt',b'.xmlff')(5A8CE5B8h:4Ah)</div><div class="a s" style="left:14px;top:258.83px;font-size:13.6px;color:#ececec;line-height:14px;-webkit-text-stroke:0.3px #ececec">33407</div><div class="a s" style="left:63px;top:258.83px;font-size:13.48px;color:#ececec;line-height:14px;-webkit-text-stroke:0.3px #ececec">[0x97ee0c][TID:7012]:--&gt;shlwapi_StrStrIW(b'C:¥¥pin¥¥licensing¥¥third-party-programs.txt',b'.abcddb')(5A8CE5B8h:4Ah)</div><div class="a s" style="left:14px;top:272.4px;font-size:13.6px;color:#ececec;line-height:14px;-webkit-text-stroke:0.3px #ececec">33408</div><div class="a s" style="left:63px;top:272.4px;font-size:13.48px;color:#ececec;line-height:14px;-webkit-text-stroke:0.3px #ececec">[0x97ee0c][TID:7012]:--&gt;shlwapi_StrStrIW(b'C:¥¥pin¥¥licensing¥¥third-party-programs.txt',b'.abs')(5A8CE5B8h:4Ah)</div><div class="a s" style="left:14px;top:285.97px;font-size:13.6px;color:#ececec;line-height:14px;-webkit-text-stroke:0.3px #ececec">33409</div><div class="a s" style="left:63px;top:285.97px;font-size:13.48px;color:#ececec;line-height:14px;-webkit-text-stroke:0.3px #ececec">[0x97ee0c][TID:7012]:--&gt;shlwapi_StrStrIW(b'C:¥¥pin¥¥licensing¥¥third-party-programs.txt',b'.abx')(5A8CE5B8h:4Ah)</div><div class="a s" style="left:14px;top:299.54px;font-size:13.6px;color:#ececec;line-height:14px;-webkit-text-stroke:0.3px #ececec">33410</div><div class="a s" style="left:63px;top:299.54px;font-size:13.48px;color:#ececec;line-height:14px;-webkit-text-stroke:0.3px #ececec">[0x97ee0c][TID:7012]:--&gt;shlwapi_StrStrIW(b'C:¥¥pin¥¥licensing¥¥third-party-programs.txt',b'.accdw')(5A8CE5B8h:4Ah)</div><div class="a s" style="left:14px;top:313.11px;font-size:13.6px;color:#ececec;line-height:14px;-webkit-text-stroke:0.3px #ececec">33411</div><div class="a s" style="left:63px;top:313.11px;font-size:13.48px;color:#ececec;line-height:14px;-webkit-text-stroke:0.3px #ececec">[0x97ee0c][TID:7012]:--&gt;shlwapi_StrStrIW(b'C:¥¥pin¥¥licensing¥¥third-party-programs.txt',b'.adn')(5A8CE5B8h:4Ah)</div><div class="a s" style="left:14px;top:326.68px;font-size:13.6px;color:#ececec;line-height:14px;-webkit-text-stroke:0.3px #ececec">33412</div><div class="a s" style="left:63px;top:326.68px;font-size:13.48px;color:#ececec;line-height:14px;-webkit-text-stroke:0.3px #ececec">[0x97ee0c][TID:7012]:--&gt;shlwapi_StrStrIW(b'C:¥¥pin¥¥licensing¥¥third-party-programs.txt',b'.db2')(5A8CE5B8h:4Ah)</div><div class="a s" style="left:14px;top:340.25px;font-size:13.6px;color:#ececec;line-height:14px;-webkit-text-stroke:0.3px #ececec">33413</div><div class="a s" style="left:63px;top:340.25px;font-size:13.48px;color:#ececec;line-height:14px;-webkit-text-stroke:0.3px #ececec">[0x97ee0c][TID:7012]:--&gt;shlwapi_StrStrIW(b'C:¥¥pin¥¥licensing¥¥third-party-programs.txt',b'.fm5')(5A8CE5B8h:4Ah)</div><div class="a s" style="left:14px;top:353.82px;font-size:13.6px;color:#ececec;line-height:14px;-webkit-text-stroke:0.3px #ececec">33414</div><div class="a s" style="left:63px;top:353.82px;font-size:13.48px;color:#ececec;line-height:14px;-webkit-text-stroke:0.3px #ececec">[0x980c74][TID:4640]:--&gt;kernel32_GetLastError(1FBBB84Fh:10h)</div><div class="a s" style="left:14px;top:367.39px;font-size:13.6px;color:#ececec;line-height:14px;-webkit-text-stroke:0.3px #ececec">33415</div><div class="a s" style="left:63px;top:367.39px;font-size:13.48px;color:#ececec;line-height:14px;-webkit-text-stroke:0.3px #ececec">[0x980ca9][TID:4640]:--&gt;kernel32_GetLastError(1FBBB84Fh:10h)</div><div class="a s" style="left:14px;top:380.96000000000004px;font-size:13.6px;color:#dcdc3c;line-height:14px;-webkit-text-stroke:0.3px #dcdc3c">33416</div><div class="a s" style="left:63px;top:380.96000000000004px;font-size:13.48px;color:#dcdc3c;line-height:14px;-webkit-text-stroke:0.3px #dcdc3c">[0x98561f][TID:4640]:--&gt;kernel32_FindNextFileW(9AEA18E1h:2Fh)</div><div class="a s" style="left:14px;top:394.53000000000003px;font-size:13.6px;color:#ececec;line-height:14px;-webkit-text-stroke:0.3px #ececec">33417</div><div class="a s" style="left:63px;top:394.53000000000003px;font-size:13.48px;color:#ececec;line-height:14px;-webkit-text-stroke:0.3px #ececec">[0x9852f9][TID:4640]:--&gt;kernel32_lstrcmpW(397B11DFh:31h)</div><div class="a s" style="left:14px;top:408.1px;font-size:13.6px;color:#ececec;line-height:14px;-webkit-text-stroke:0.3px #ececec">33418</div><div class="a s" style="left:63px;top:408.1px;font-size:13.48px;color:#ececec;line-height:14px;-webkit-text-stroke:0.3px #ececec">[0x97ee0c][TID:7012]:--&gt;shlwapi_StrStrIW(b'C:¥¥pin¥¥licensing¥¥third-party-programs.txt',b'.hjt')(5A8CE5B8h:4Ah)</div></div><div class="a" style="left:928px;top:84px;width:12px;height:450px;background:#eeeeee"><svg class="a" style="left:2px;top:5px" width="8" height="6"><path d="M1 5 L4 2 L7 5" stroke="#555" stroke-width="1.3" fill="none"/></svg><div class="a" style="left:1px;top:423px;width:10px;height:13px;background:#c8c8c8"></div><svg class="a" style="left:1px;top:440px" width="9" height="7"><path d="M1 1.5 L4.5 5 L8 1.5" stroke="#555" stroke-width="1.5" fill="none"/></svg></div><div class="a" style="left:2px;top:521px;width:926px;height:13px;background:#fdfdfd"></div><div class="a" style="left:2px;top:534px;width:938px;height:14px;background:#f0f0f0"><svg class="a" style="left:4px;top:2px" width="7" height="9"><path d="M5.5 1 L2 4.5 L5.5 8" stroke="#333" stroke-width="1.5" fill="none"/></svg><div class="a" style="left:14px;top:1px;width:886px;height:12px;background:#c8c8c8"></div><svg class="a" style="left:915px;top:2px" width="7" height="9"><path d="M1.5 1 L5 4.5 L1.5 8" stroke="#444" stroke-width="1.5" fill="none"/></svg></div><div class="a" style="left:1px;top:548px;width:942px;height:2px;background:#8c8c8c"></div><div class="a" style="left:940px;top:0px;width:4px;height:554px;background:linear-gradient(90deg,#9a9a9a,#7c7c7c)"></div><div class="a" style="left:1px;top:550px;width:942px;height:4px;background:#e8e8e8;border-top:1px solid #f8f8f8;border-bottom:1px solid #d0d0d0"></div></div><div class="a" style="left:0px;top:0px;width:2000px;height:64px;background:#000"></div><div class="a" style="left:0px;top:0px;width:72px;height:1000px;background:#000"></div><div class="a" style="left:1961px;top:0px;width:39px;height:1000px;background:#000"></div><div class="a" style="left:0px;top:998px;width:2000px;height:2px;background:#000"></div></body></html>
